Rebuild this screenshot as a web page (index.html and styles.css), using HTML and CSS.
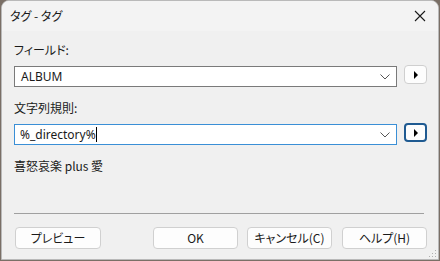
FILE: index.html
```html
<!DOCTYPE html>
<html lang="ja">
<head>
<meta charset="utf-8">
<link rel="stylesheet" href="styles.css">
</head>
<body>
<div class="window">
  <div class="titlebar">
    <span class="title">タグ - タグ</span>
    <svg class="close" width="12" height="12" viewBox="0 0 12 12"><path d="M1 1 L11 11 M11 1 L1 11" stroke="#1a1a1a" stroke-width="1.1" fill="none"/></svg>
  </div>
  <div class="content">
    <div class="label l1">フィールド:</div>
    <div class="row">
      <div class="combo"><span class="val">ALBUM</span>
        <svg class="chev" width="10" height="6" viewBox="0 0 10 6"><path d="M0.5 0.5 L5 5 L9.5 0.5" stroke="#555" stroke-width="1" fill="none"/></svg>
      </div>
      <div class="mini"><svg width="6" height="8" viewBox="0 0 6 8"><path d="M1 0 L5 4 L1 8 Z" fill="#000"/></svg></div>
    </div>
    <div class="label l2">文字列規則:</div>
    <div class="row">
      <div class="combo focus"><span class="val">%_directory%</span><span class="caret"></span>
        <svg class="chev" width="10" height="6" viewBox="0 0 10 6"><path d="M0.5 0.5 L5 5 L9.5 0.5" stroke="#555" stroke-width="1" fill="none"/></svg>
      </div>
      <div class="mini focus"><svg width="6" height="8" viewBox="0 0 6 8"><path d="M1 0 L5 4 L1 8 Z" fill="#000"/></svg></div>
    </div>
    <div class="preview">喜怒哀楽 plus 愛</div>
    <div class="sep"></div>
    <div class="buttons">
      <div class="btn b-prev">プレビュー</div>
      <div class="btn b-ok">OK</div>
      <div class="btn b-cancel">キャンセル(C)</div>
      <div class="btn b-help">ヘルプ(H)</div>
    </div>
  </div>
  <div class="grip"></div>
</div>
</body>
</html>
```
FILE: styles.css
```css
html, body {
  margin: 0;
  padding: 0;
}
body {
  width: 440px;
  height: 261px;
  background: #7a6f66;
  overflow: hidden;
  font-family: "Noto Sans CJK JP", "Noto Sans", sans-serif;
  font-size: 12px;
  color: #1a1a1a;
  font-feature-settings: "palt";
}
.window {
  position: relative;
  margin-left: 1px;
  width: 436px;
  height: 258px;
  background: #f0f0f0;
  border: 1px solid #b9b9b9;
  border-radius: 8px 8px 0 0;
  overflow: hidden;
  display: flex;
  flex-direction: column;
}
.titlebar {
  height: 30px;
  flex: none;
  background: #f3f3f3;
  display: flex;
  align-items: center;
  justify-content: space-between;
  padding: 0 12px 0 8px;
}
.title {
  font-size: 12px;
  line-height: 16px;
  color: #1a1a1a;
}
.close {
  display: block;
}
.content {
  padding: 0 0 0 12px;
  display: flex;
  flex-direction: column;
}
.label {
  line-height: 16px;
  height: 16px;
}
.l1 { margin-top: 11px; }
.l2 { margin-top: 13px; }
.row {
  display: flex;
  align-items: flex-start;
  gap: 7px;
  margin-top: 8px;
}
.combo {
  box-sizing: border-box;
  width: 383px;
  height: 21px;
  background: #fff;
  border: 1px solid #7a7a7a;
  display: flex;
  align-items: center;
  padding-left: 6px;
  position: relative;
}
.combo.focus {
  border-color: #3a8fd6;
  padding-left: 5px;
}
.val {
  font-family: "Noto Sans", "Noto Sans CJK JP", sans-serif;
  font-size: 12px;
  line-height: 16px;
}
.caret {
  width: 1px;
  height: 15px;
  background: #000;
  margin-left: 0;
}
.chev {
  position: absolute;
  right: 6px;
  top: 7px;
}
.mini {
  box-sizing: border-box;
  width: 23px;
  height: 19px;
  margin-top: -1px;
  background: #fdfdfd;
  border: 1px solid #cfcfcf;
  border-radius: 4px;
  display: flex;
  align-items: center;
  justify-content: center;
}
.mini.focus {
  border: 2px solid #1f5a91;
}
.preview {
  margin-top: 13px;
  line-height: 16px;
}
.sep {
  margin-top: 39px;
  width: 410px;
  height: 1px;
  background: #a0a0a0;
}
.buttons {
  display: flex;
  margin-top: 13px;
}
.btn {
  box-sizing: border-box;
  height: 22px;
  background: #fdfdfd;
  border: 1px solid #d0d0d0;
  border-radius: 4px;
  display: flex;
  align-items: center;
  justify-content: center;
  line-height: 16px;
}
.b-prev { width: 86px; margin-left: 1px; }
.b-ok { width: 85px; margin-left: 52px; }
.b-cancel { width: 85px; margin-left: 9px; }
.b-help { width: 85px; margin-left: 10px; }
.grip {
  position: absolute;
  right: 2px;
  bottom: 2px;
  width: 8px;
  height: 8px;
  background:
    radial-gradient(circle, #b0b0b0 0.8px, transparent 1px) 0 0 / 3px 3px;
  clip-path: polygon(100% 0, 100% 100%, 0 100%);
}
```
